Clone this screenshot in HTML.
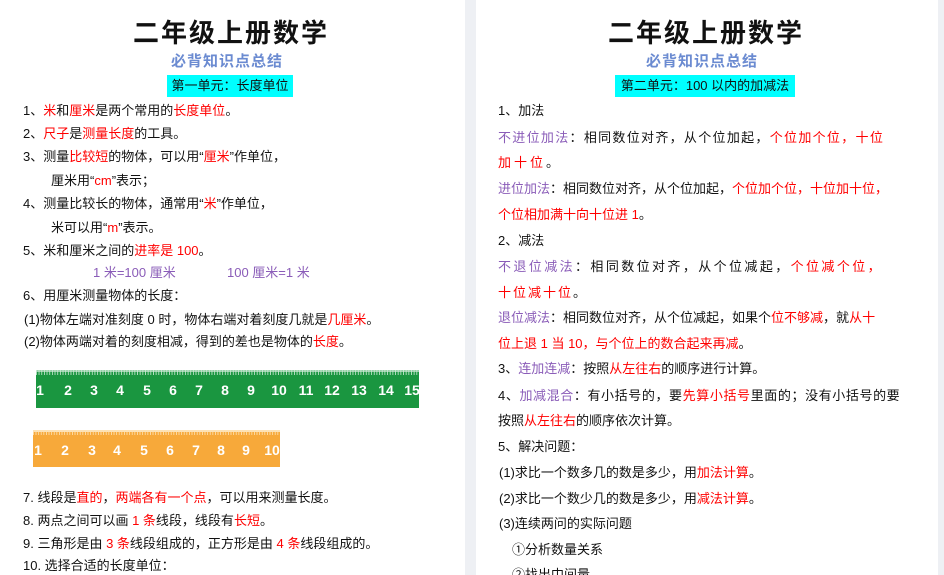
<!DOCTYPE html>
<html><head><meta charset="utf-8"><style>
html,body{margin:0;width:944px;height:575px;overflow:hidden;background:#eef0f4}
body{font-family:"Liberation Sans","Noto Sans CJK SC",sans-serif;position:relative}
#w{position:absolute;left:0;top:0;width:944px;height:575px;overflow:hidden}
.pg{position:absolute;top:0;height:575px;background:#fff}
.t{position:absolute;white-space:nowrap;font-size:13px;line-height:18px;color:#111}
.r{color:#f00}.p{color:#8a5cb8}
.title{position:absolute;font-size:26px;font-weight:bold;line-height:30px;color:#111;font-family:"Noto Sans CJK SC",sans-serif;letter-spacing:2px}
.sub{position:absolute;font-size:15px;font-weight:bold;line-height:20px;color:#6b8bd1;letter-spacing:1px}
.box{position:absolute;background:#0ff;font-size:13px;line-height:22px;height:22px;text-align:center;color:#111}
</style></head><body><div id="w">
<div class="pg" style="left:0;width:465px"></div>
<div class="pg" style="left:476px;width:462px"></div>

<div class="title" style="left:133px;top:17px">二年级上册数学</div>
<div class="sub" style="left:171px;top:52px">必背知识点总结</div>
<div class="box" style="left:167px;top:75px;width:126px">第一单元：长度单位</div>
<div class="t" style="left:23px;top:102px">1、<span class="r">米</span>和<span class="r">厘米</span>是两个常用的<span class="r">长度单位</span>。</div>
<div class="t" style="left:23px;top:125px">2、<span class="r">尺子</span>是<span class="r">测量长度</span>的工具。</div>
<div class="t" style="left:23px;top:148px">3、测量<span class="r">比较短</span>的物体，可以用“<span class="r">厘米</span>”作单位，</div>
<div class="t" style="left:51px;top:172px">厘米用“<span class="r">cm</span>”表示；</div>
<div class="t" style="left:23px;top:195px">4、测量比较长的物体，通常用“<span class="r">米</span>”作单位，</div>
<div class="t" style="left:51px;top:219px">米可以用“<span class="r">m</span>”表示。</div>
<div class="t" style="left:23px;top:242px">5、米和厘米之间的<span class="r">进率是 100</span>。</div>
<div class="t p" style="left:93px;top:264px">1 米=100 厘米</div>
<div class="t p" style="left:227px;top:264px">100 厘米=1 米</div>
<div class="t" style="left:23px;top:287px">6、用厘米测量物体的长度：</div>
<div class="t" style="left:24px;top:311px">(1)物体左端对准刻度 0 时，物体右端对着刻度几就是<span class="r">几厘米</span>。</div>
<div class="t" style="left:24px;top:333px">(2)物体两端对着的刻度相减，得到的差也是物体的<span class="r">长度</span>。</div>

<svg style="position:absolute;left:36px;top:370px" width="383" height="38">
<defs><pattern id="tk" width="2.66" height="38" patternUnits="userSpaceOnUse"><rect x="0" y="0" width="0.8" height="5" fill="#cfe9d6"/></pattern>
<pattern id="tk2" width="2.6" height="37" patternUnits="userSpaceOnUse"><rect x="0" y="0" width="0.8" height="5" fill="#fde2b5"/></pattern></defs>
<rect width="383" height="38" fill="#1a9640"/>
<rect width="383" height="6" fill="url(#tk)"/>
<rect x="0" y="0" width="383" height="2" fill="#cfe9d6" opacity=".7"/>
<g fill="#fff" font-size="14" font-weight="bold" font-family="Liberation Sans" text-anchor="middle">
<text x="4" y="25">1</text><text x="32" y="25">2</text><text x="58" y="25">3</text><text x="84" y="25">4</text><text x="111" y="25">5</text><text x="137" y="25">6</text><text x="163" y="25">7</text><text x="189" y="25">8</text><text x="215" y="25">9</text><text x="243" y="25">10</text><text x="270" y="25">11</text><text x="296" y="25">12</text><text x="323" y="25">13</text><text x="350" y="25">14</text><text x="376" y="25">15</text>
</g></svg>
<svg style="position:absolute;left:33px;top:430px" width="247" height="37">
<rect width="247" height="37" fill="#f7a93a"/>
<rect width="247" height="6" fill="url(#tk2)"/>
<rect x="0" y="0" width="247" height="2" fill="#fde2b5"/>
<g fill="#fff" font-size="14" font-weight="bold" font-family="Liberation Sans" text-anchor="middle">
<text x="5" y="25">1</text><text x="32" y="25">2</text><text x="59" y="25">3</text><text x="84" y="25">4</text><text x="111" y="25">5</text><text x="137" y="25">6</text><text x="163" y="25">7</text><text x="188" y="25">8</text><text x="213" y="25">9</text><text x="239" y="25">10</text>
</g></svg>

<div class="t" style="left:23px;top:489px">7. 线段是<span class="r">直的</span>，<span class="r">两端各有一个点</span>，可以用来测量长度。</div>
<div class="t" style="left:23px;top:512px">8. 两点之间可以画 <span class="r">1 条</span>线段，线段有<span class="r">长短</span>。</div>
<div class="t" style="left:23px;top:535px">9. 三角形是由 <span class="r">3 条</span>线段组成的，正方形是由 <span class="r">4 条</span>线段组成的。</div>
<div class="t" style="left:23px;top:557px">10. 选择合适的长度单位：</div>

<div class="title" style="left:608px;top:17px">二年级上册数学</div>
<div class="sub" style="left:646px;top:52px">必背知识点总结</div>
<div class="box" style="left:615px;top:75px;width:180px">第二单元：100 以内的加减法</div>
<div class="t" style="left:498px;top:102px">1、加法</div>
<div class="t" style="left:498px;top:129px;letter-spacing:1.3px"><span class="p">不进位加法</span>：相同数位对齐，从个位加起，<span class="r">个位加个位，十位</span></div>
<div class="t r" style="left:498px;top:154px;letter-spacing:3px">加十位<span style="color:#111">。</span></div>
<div class="t" style="left:498px;top:180px"><span class="p">进位加法</span>：相同数位对齐，从个位加起，<span class="r">个位加个位，十位加十位，</span></div>
<div class="t r" style="left:498px;top:206px">个位相加满十向十位进 1<span style="color:#111">。</span></div>
<div class="t" style="left:498px;top:232px">2、减法</div>
<div class="t" style="left:498px;top:258px;letter-spacing:2.4px"><span class="p">不退位减法</span>：相同数位对齐，从个位减起，<span class="r">个位减个位，</span></div>
<div class="t r" style="left:498px;top:284px;letter-spacing:2px">十位减十位<span style="color:#111">。</span></div>
<div class="t" style="left:498px;top:309px"><span class="p">退位减法</span>：相同数位对齐，从个位减起，如果个<span class="r">位不够减</span>，就<span class="r">从十</span></div>
<div class="t r" style="left:498px;top:335px">位上退 1 当 10，与个位上的数合起来再减<span style="color:#111">。</span></div>
<div class="t" style="left:498px;top:360px">3、<span class="p">连加连减</span>：按照<span class="r">从左往右</span>的顺序进行计算。</div>
<div class="t" style="left:498px;top:387px;letter-spacing:.6px">4、<span class="p">加减混合</span>：有小括号的，要<span class="r">先算小括号</span>里面的；没有小括号的要</div>
<div class="t" style="left:498px;top:412px">按照<span class="r">从左往右</span>的顺序依次计算。</div>
<div class="t" style="left:498px;top:438px">5、解决问题：</div>
<div class="t" style="left:499px;top:464px">(1)求比一个数多几的数是多少，用<span class="r">加法计算</span>。</div>
<div class="t" style="left:499px;top:490px">(2)求比一个数少几的数是多少，用<span class="r">减法计算</span>。</div>
<div class="t" style="left:499px;top:515px">(3)连续两问的实际问题</div>
<div class="t" style="left:512px;top:541px">①分析数量关系</div>
<div class="t" style="left:512px;top:566px;height:9px;overflow:hidden">②找出中间量</div>
</div></body></html>
